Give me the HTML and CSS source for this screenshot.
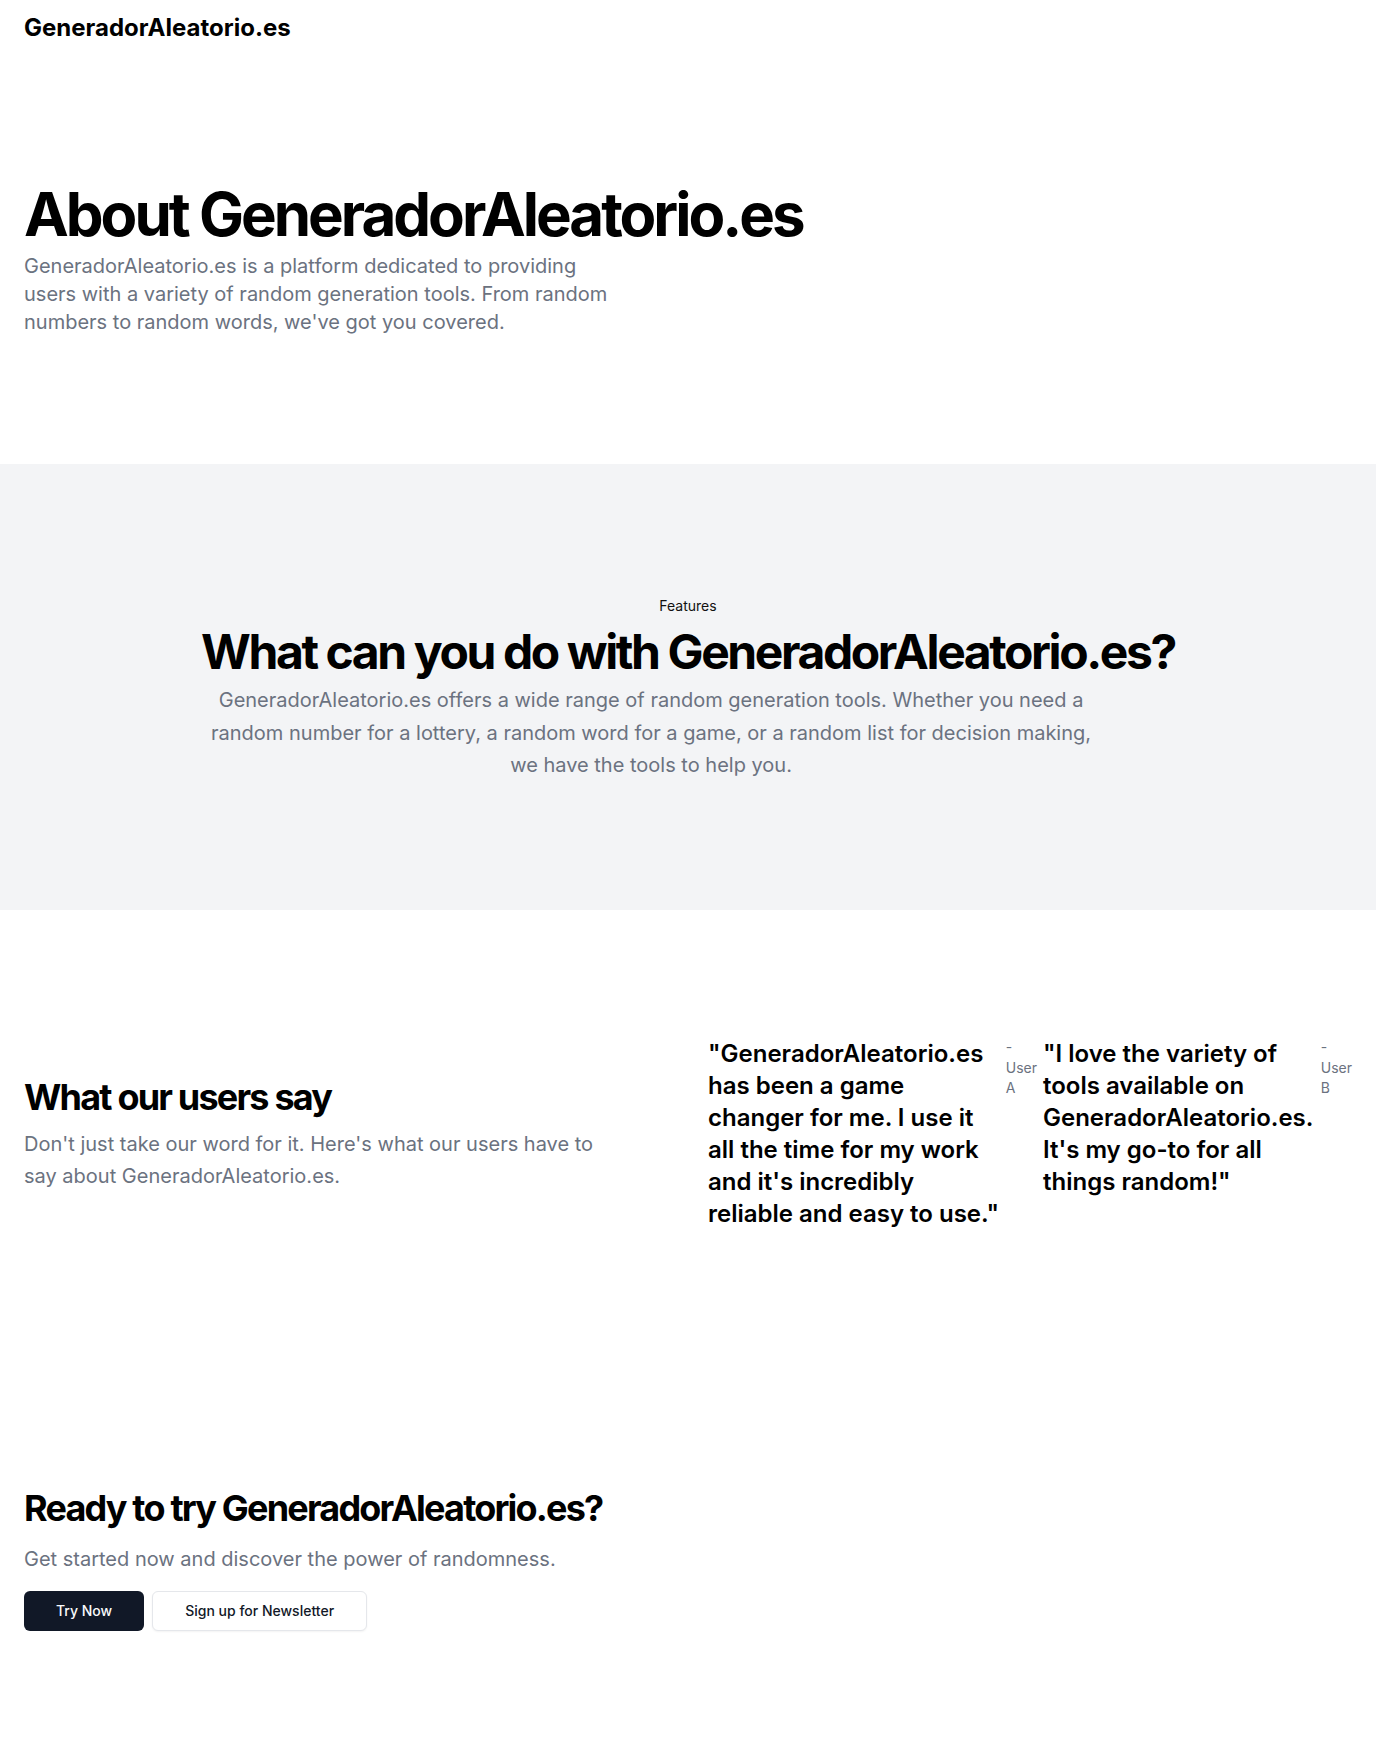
FILE: index.html
```html
<!DOCTYPE html>
<html lang="en">
<head>
<meta charset="utf-8">
<title>GeneradorAleatorio.es</title>
<link rel="stylesheet" href="styles.css">
</head>
<body>
<header class="site-header">
  <a class="brand" href="#">GeneradorAleatorio.es</a>
</header>
<main>
  <section class="about">
    <div class="container">
      <div class="stack-2">
        <h1 class="hero-title">About GeneradorAleatorio.es</h1>
        <p class="lead narrow">GeneradorAleatorio.es is a platform dedicated to providing users with a variety of random generation tools. From random numbers to random words, we've got you covered.</p>
      </div>
    </div>
  </section>

  <section class="features">
    <div class="container center-col">
      <div class="stack-2 features-inner">
        <div class="badge">Features</div>
        <h2 class="section-title">What can you do with GeneradorAleatorio.es?</h2>
        <p class="body-xl features-text">GeneradorAleatorio.es offers a wide range of random generation tools. Whether you need a random number for a lottery, a random word for a game, or a random list for decision making, we have the tools to help you.</p>
      </div>
    </div>
  </section>

  <section class="testimonials">
    <div class="container two-col">
      <div class="stack-2">
        <h2 class="sub-title">What our users say</h2>
        <p class="body-xl narrow">Don't just take our word for it. Here's what our users have to say about GeneradorAleatorio.es.</p>
      </div>
      <div class="quotes">
        <figure class="quote">
          <blockquote>"GeneradorAleatorio.es has been a game changer for me. I use it all the time for my work and it's incredibly reliable and easy to use."</blockquote>
          <figcaption>- User A</figcaption>
        </figure>
        <figure class="quote">
          <blockquote>"I love the variety of tools available on GeneradorAleatorio.es. It's my go-to for all things random!"</blockquote>
          <figcaption>- User B</figcaption>
        </figure>
      </div>
    </div>
  </section>

  <section class="cta">
    <div class="container">
      <div class="stack-3">
        <h2 class="sub-title">Ready to try GeneradorAleatorio.es?</h2>
        <p class="body-xl narrow">Get started now and discover the power of randomness.</p>
      </div>
      <div class="actions">
        <a class="btn btn-primary" href="#">Try Now</a>
        <a class="btn btn-outline" href="#">Sign up for Newsletter</a>
      </div>
    </div>
  </section>
</main>
</body>
</html>
```

FILE: styles.css
```css
* { box-sizing: border-box; }
html, body { margin: 0; padding: 0; }
body {
  font-family: "Inter", "Liberation Sans", sans-serif;
  color: #000;
  background: #fff;
}
h1, h2, p, blockquote, figure { margin: 0; }
a { text-decoration: none; color: inherit; }

.site-header {
  height: 56px;
  display: flex;
  align-items: center;
  padding: 0 24px;
}
.brand {
  font-size: 24px;
  line-height: 32px;
  font-weight: 700;
  color: #000;
}

.container {
  width: 100%;
  padding: 0 24px;
}

.about, .features, .testimonials, .cta {
  padding: 128px 0;
}
.features { background: #f3f4f6; }

.stack-2 { display: flex; flex-direction: column; gap: 8px; }
.stack-3 { display: flex; flex-direction: column; gap: 12px; }

.hero-title {
  font-size: 60px;
  line-height: 1;
  font-weight: 700;
  letter-spacing: -0.05em;
}
.lead {
  font-size: 20px;
  line-height: 28px;
  color: #6b7280;
}
.narrow { max-width: 600px; }

.center-col {
  display: flex;
  flex-direction: column;
  align-items: center;
  text-align: center;
}
.features-inner { align-items: flex-start; }
.badge {
  align-self: center;
  display: inline-block;
  padding: 4px 12px;
  font-size: 14px;
  line-height: 20px;
  border-radius: 8px;
  background: #f3f4f6;
  color: #111;
}
.section-title {
  font-size: 48px;
  line-height: 1;
  font-weight: 700;
  letter-spacing: -0.05em;
  white-space: nowrap;
}
.body-xl {
  font-size: 20px;
  line-height: 1.625;
  color: #6b7280;
}
.features-text { max-width: 900px; }

.two-col {
  display: grid;
  grid-template-columns: 1fr 1fr;
  column-gap: 40px;
  align-items: center;
}
.sub-title {
  font-size: 36px;
  line-height: 1.25;
  font-weight: 700;
  letter-spacing: -0.05em;
}

.quotes {
  display: grid;
  grid-template-columns: 329fr 309fr;
  column-gap: 6px;
  align-items: start;
}
.quote {
  display: grid;
  grid-template-columns: minmax(0, 1fr) min-content;
  column-gap: 6px;
  align-items: start;
}
.quote blockquote {
  font-size: 24px;
  line-height: 32px;
  font-weight: 600;
}
.quote figcaption {
  font-size: 14px;
  line-height: 20px;
  color: #6b7280;
}

.actions {
  display: flex;
  gap: 8px;
  margin-top: 16px;
}
.btn {
  display: inline-flex;
  align-items: center;
  justify-content: center;
  height: 40px;
  padding: 0 32px;
  border-radius: 6px;
  font-size: 14px;
  line-height: 20px;
  font-weight: 500;
}
.btn-primary {
  background: #111827;
  color: #f9fafb;
}
.btn-outline {
  background: #fff;
  color: #111827;
  border: 1px solid #e5e7eb;
  box-shadow: 0 1px 2px rgba(0, 0, 0, 0.05);
}
```
